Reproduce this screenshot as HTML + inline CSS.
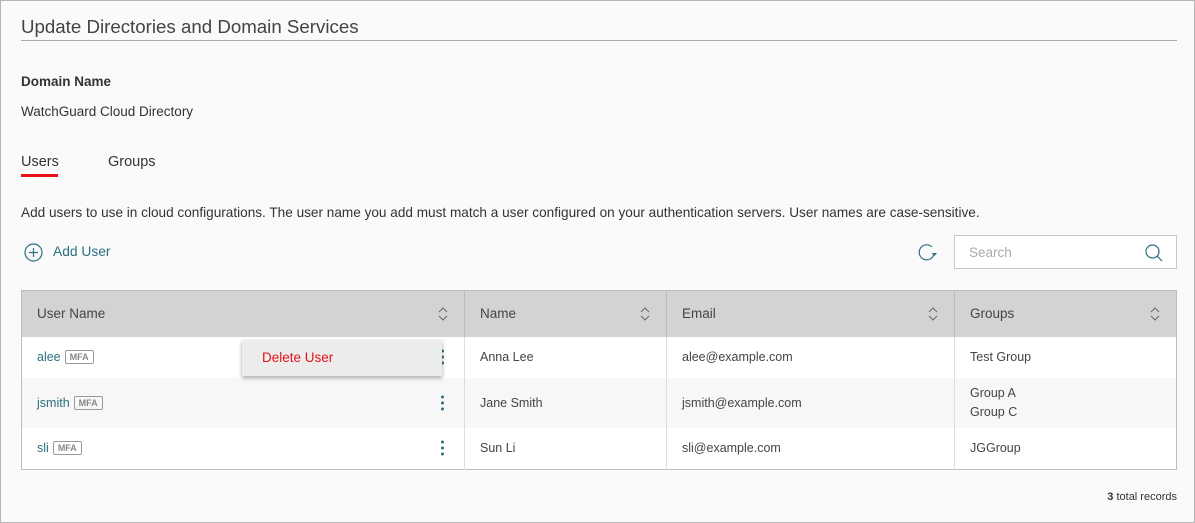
<!DOCTYPE html>
<html><head><style>
*{box-sizing:border-box;margin:0;padding:0}
body{width:1195px;height:523px;background:#fafafa;font-family:"Liberation Sans",sans-serif;color:#333;position:relative;overflow:hidden;font-size:13px}
.frame{position:absolute;left:0;top:0;width:1195px;height:523px;border:1px solid #b5b5b5}
.a{position:absolute;white-space:nowrap}
.teal{color:#2d7080}
table{position:absolute;left:21px;top:290px;width:1156px;border-collapse:collapse;border:1px solid #bdbdbd}
th{background:#d3d3d3;height:46px;text-align:left;font-weight:normal;font-size:13.5px;color:#444;padding-left:15px;position:relative;border-right:1px solid #bdbdbd}
td{font-size:12.5px;padding-left:15px;position:relative;border-right:1px solid #ddd;background:#fff;color:#444}
tr.r2 td{background:#f7f7f7}
.sort{position:absolute;right:16px;top:16px}
.mfa{display:inline-block;border:1px solid #999;border-radius:2px;font-size:9px;font-weight:bold;color:#888;padding:1px 4px;margin-left:4px;vertical-align:1px}
.dots{position:absolute;right:20px;top:50%;transform:translateY(-50%);width:3px}
.dots i{display:block;width:3px;height:3px;border-radius:50%;background:#2d7080;margin:3px 0}
</style></head><body>
<div class="frame"></div>
<div class="a" style="left:21px;top:16px;font-size:18.7px;color:#444">Update Directories and Domain Services</div>
<div class="a" style="left:21px;top:40px;width:1156px;height:1px;background:#aaa"></div>
<div class="a" style="left:21px;top:74px;font-weight:bold;font-size:13.5px">Domain Name</div>
<div class="a" style="left:21px;top:104px;font-size:13.5px">WatchGuard Cloud Directory</div>
<div class="a" style="left:21px;top:154px;font-size:14.5px">Users</div>
<div class="a" style="left:21px;top:174px;width:37px;height:3px;background:#e8111a"></div>
<div class="a" style="left:108px;top:154px;font-size:14.5px">Groups</div>
<div class="a" style="left:21px;top:205px;font-size:13.6px">Add users to use in cloud configurations. The user name you add must match a user configured on your authentication servers. User names are case-sensitive.</div>
<svg class="a" style="left:24px;top:243px" width="19" height="19" viewBox="0 0 19 19"><circle cx="9.5" cy="9.5" r="8.5" fill="none" stroke="#2d7080" stroke-width="1.2"/><path d="M9.5 5v9M5 9.5h9" stroke="#2d7080" stroke-width="1.2"/></svg>
<div class="a teal" style="left:53px;top:244px;font-size:13.8px">Add User</div>
<svg class="a" style="left:917px;top:243px" width="22" height="20" viewBox="0 0 22 20"><path d="M17 11A7.5 7.5 0 1 1 15 4" fill="none" stroke="#2d7080" stroke-width="1.2"/><path d="M14.5 10l3 3 2.5-3z" fill="#2d7080"/></svg>
<div class="a" style="left:954px;top:235px;width:223px;height:34px;background:#fff;border:1px solid #c8c8c8"></div>
<div class="a" style="left:969px;top:245px;font-size:13.5px;color:#aaa">Search</div>
<svg class="a" style="left:1144px;top:243px" width="20" height="20" viewBox="0 0 20 20"><circle cx="8.5" cy="8.5" r="6.5" fill="none" stroke="#2d7080" stroke-width="1.2"/><path d="M13.3 13.3L18 18" stroke="#2d7080" stroke-width="1.2"/></svg>
<table>
<tr><th style="width:443px">User Name<svg class="sort" width="10" height="14" viewBox="0 0 10 14"><path d="M1 5l4-4 4 4M1 9l4 4 4-4" fill="none" stroke="#666" stroke-width="1"/></svg></th>
<th style="width:202px">Name<svg class="sort" width="10" height="14" viewBox="0 0 10 14"><path d="M1 5l4-4 4 4M1 9l4 4 4-4" fill="none" stroke="#666" stroke-width="1"/></svg></th>
<th style="width:288px">Email<svg class="sort" width="10" height="14" viewBox="0 0 10 14"><path d="M1 5l4-4 4 4M1 9l4 4 4-4" fill="none" stroke="#666" stroke-width="1"/></svg></th>
<th style="border-right:none">Groups<svg class="sort" width="10" height="14" viewBox="0 0 10 14"><path d="M1 5l4-4 4 4M1 9l4 4 4-4" fill="none" stroke="#666" stroke-width="1"/></svg></th></tr>
<tr style="height:41px"><td><span class="teal">alee</span><span class="mfa">MFA</span><div class="dots"><i></i><i></i><i></i></div></td><td>Anna Lee</td><td>alee@example.com</td><td style="border-right:none">Test Group</td></tr>
<tr class="r2" style="height:50px"><td><span class="teal">jsmith</span><span class="mfa">MFA</span><div class="dots"><i></i><i></i><i></i></div></td><td>Jane Smith</td><td>jsmith@example.com</td><td style="border-right:none;line-height:19px">Group A<br>Group C</td></tr>
<tr style="height:42px"><td><span class="teal">sli</span><span class="mfa">MFA</span><div class="dots"><i></i><i></i><i></i></div></td><td>Sun Li</td><td>sli@example.com</td><td style="border-right:none">JGGroup</td></tr>
</table>
<div class="a" style="left:242px;top:340px;width:200px;height:36px;background:#ececec;box-shadow:0 2px 4px rgba(0,0,0,.35)"></div>
<div class="a" style="left:262px;top:350px;font-size:13.5px;color:#e8111a">Delete User</div>
<div class="a" style="right:18px;top:491px;font-size:11px"><b>3</b> total records</div>
</body></html>
